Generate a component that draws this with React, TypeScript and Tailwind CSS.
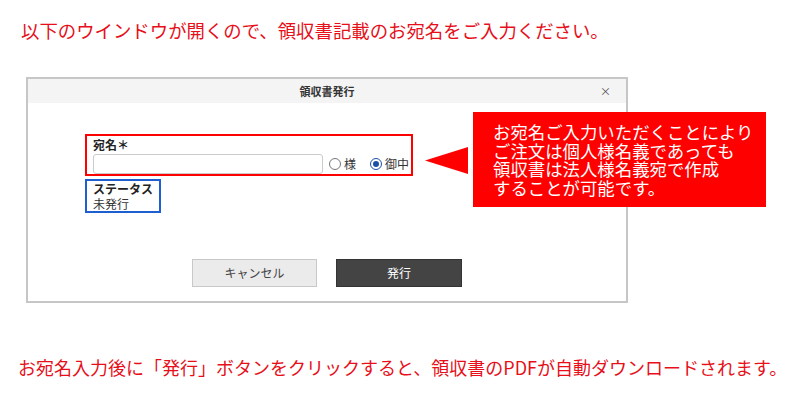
import React from "react";

const Radio = ({ checked }: { checked?: boolean }) => {
  return checked ? (
    <span className="flex shrink-0 items-center justify-center w-[12px] h-[12px] rounded-full border border-[#1d4fa8] bg-white">
      <span className="w-[6px] h-[6px] rounded-full bg-[#1d4fa8]" />
    </span>
  ) : (
    <span className="shrink-0 w-[12px] h-[12px] rounded-full border border-[#777777] bg-white" />
  );
};

const App = () => {
  return (
    <div
      className="relative w-[800px] h-[400px] bg-white overflow-hidden"
      style={{ fontFamily: '"Noto Sans CJK JP", "Noto Sans", sans-serif' }}
    >
      <p className="pl-[21px] pt-[21px] text-[18.4px] leading-[18px] whitespace-nowrap text-[#e60f1a]">
        以下のウインドウが開くので、領収書記載のお宛名をご入力ください。
      </p>

      {/* Dialog */}
      <div className="mt-[38px] ml-[26px] w-[602px] h-[226px] border-2 border-[#c6c6c6]">
        <div className="grid grid-cols-[1fr_auto_1fr] items-center h-[24px] bg-[#f4f4f4]">
          <span />
          <span className="text-[11px] font-bold text-[#333333]">領収書発行</span>
          <span className="justify-self-end pr-[15px] text-[11px] text-[#555555]">×</span>
        </div>

        <div className="flex flex-col pl-[57px] pt-[31px]">
          <div className="w-[328px] h-[42px] border-2 border-[#ff0000] px-[6px] pt-[2px]">
            <div className="text-[12px] leading-[14px] font-bold text-[#222222]">宛名＊</div>
            <div className="flex items-center mt-[2px] whitespace-nowrap">
              <div className="shrink-0 w-[230px] h-[20px] border border-[#cccccc] rounded-[3px] bg-white" />
              <div className="flex shrink-0 items-center gap-[3px] ml-[6px]">
                <Radio />
                <span className="text-[12px] leading-[14px] text-[#333333]">様</span>
              </div>
              <div className="flex shrink-0 items-center gap-[3px] ml-[14px]">
                <Radio checked />
                <span className="text-[12px] leading-[14px] text-[#333333]">御中</span>
              </div>
            </div>
          </div>

          <div className="mt-[3px] w-[76px] h-[34px] border-2 border-[#1d5fd0] px-[6px]">
            <div className="text-[12px] leading-[15px] font-bold text-[#222222]">ステータス</div>
            <div className="text-[12px] leading-[15px] text-[#333333]">未発行</div>
          </div>

          <div className="flex gap-[19px] ml-[107px] mt-[46px]">
            <button className="w-[125px] h-[28px] bg-[#ebebeb] border border-[#c8c8c8] text-[12px] text-[#444444]">
              キャンセル
            </button>
            <button className="w-[126px] h-[28px] bg-[#444444] border border-[#333333] text-[12px] text-white">
              発行
            </button>
          </div>
        </div>
      </div>

      <p className="pl-[18px] mt-[55px] text-[18px] leading-[18px] whitespace-nowrap text-[#e60f1a]">
        お宛名入力後に「発行」ボタンをクリックすると、領収書のPDFが自動ダウンロードされます。
      </p>

      {/* Callout */}
      <svg className="absolute left-[425px] top-[147px]" width="43" height="27" viewBox="0 0 43 27">
        <polygon points="0,13.5 43,0 43,27" fill="#ff0000" />
      </svg>
      <div className="absolute left-[473px] top-[112px] w-[293px] h-[95px] bg-[#ff0000] pl-[20px] pt-[11px] text-[17.4px] leading-[18.5px] whitespace-nowrap text-white">
        <div>お宛名ご入力いただくことにより</div>
        <div>ご注文は個人様名義であっても</div>
        <div>領収書は法人様名義宛で作成</div>
        <div>することが可能です。</div>
      </div>
    </div>
  );
};

export default App;
